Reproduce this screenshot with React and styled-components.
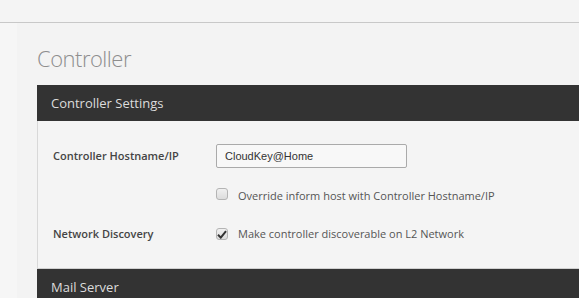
import React from "react";
import styled, { createGlobalStyle } from "styled-components";

const GlobalStyle = createGlobalStyle`
  body {
    margin: 0;
    background: #f4f4f4;
    font-family: "Open Sans", "Liberation Sans", sans-serif;
    overflow: hidden;
  }
`;

const App = () => {
  return (
    <>
      <GlobalStyle />
      <TopBar />
      <Layout>
        <Strip />
        <Main>
          <PageTitle>Controller</PageTitle>
          <SectionHeader>Controller Settings</SectionHeader>
          <SectionBody>
            <Row>
              <Label>Controller Hostname/IP</Label>
              <TextInput defaultValue="CloudKey@Home" />
            </Row>
            <Row gap={20}>
              <Label />
              <CheckLine>
                <Box offset={-2} />
                <CheckText>Override inform host with Controller Hostname/IP</CheckText>
              </CheckLine>
            </Row>
            <Row gap={22}>
              <Label>Network Discovery</Label>
              <CheckLine>
                <Box offset={0} checked>
                  <svg width="10" height="9" viewBox="0 0 10 9">
                    <path d="M1 4.8 L3.8 7.6 L9 1.2" fill="none" stroke="#333" strokeWidth="2" />
                  </svg>
                </Box>
                <CheckText>Make controller discoverable on L2 Network</CheckText>
              </CheckLine>
            </Row>
          </SectionBody>
          <SectionHeader>Mail Server</SectionHeader>
        </Main>
      </Layout>
    </>
  );
};

const TopBar = styled.div`
  height: 22px;
  border-bottom: 1px solid #c8c8c8;
  background: #f4f4f4;
`;

const Layout = styled.div`
  display: flex;
  height: 275px;
`;

const Strip = styled.div`
  width: 17px;
  flex-shrink: 0;
  background: #f6f6f6;
`;

const Main = styled.div`
  flex: 1;
  padding: 18px 0 0 20px;
  background: #f3f3f3;
`;

const PageTitle = styled.h1`
  margin: 0 0 12px;
  padding-top: 1px;
  height: 31px;
  font-size: 22px;
  line-height: 32px;
  letter-spacing: -0.5px;
  font-weight: 300;
  color: #8e8e8e;
`;

const SectionHeader = styled.div`
  height: 36px;
  line-height: 36px;
  padding-left: 14px;
  background: #333333;
  color: #dcdcdc;
  font-size: 13px;
`;

const SectionBody = styled.div`
  padding: 23px 15px 26px;
  background: #f4f4f4;
  border-left: 1px solid #d8d8d8;
  border-bottom: 1px solid #d0d0d0;
`;

const Row = styled.div`
  display: flex;
  align-items: center;
  margin-top: ${(p) => (p.gap ? `${p.gap}px` : 0)};
`;

const Label = styled.div`
  width: 163px;
  flex-shrink: 0;
  font-size: 11px;
  font-weight: 600;
  line-height: 16px;
  color: #444;
`;

const TextInput = styled.input`
  box-sizing: border-box;
  width: 191px;
  height: 24px;
  padding: 0 8px;
  border: 1px solid #aaa;
  border-radius: 2px;
  background: #f8f8f8;
  font-family: "Liberation Sans", Arial, sans-serif;
  font-size: 11px;
  color: #333;
  outline: none;
`;

const CheckLine = styled.div`
  display: flex;
  align-items: center;
`;

const Box = styled.span`
  box-sizing: border-box;
  width: 12px;
  height: 12px;
  margin-right: 10px;
  position: relative;
  top: ${(p) => p.offset}px;
  display: flex;
  align-items: center;
  justify-content: center;
  border: 1px solid #b4b4b4;
  border-radius: 3px;
  background: linear-gradient(#f0f0f0, #dcdcdc);
`;

const CheckText = styled.span`
  font-size: 11px;
  line-height: 16px;
  color: #555;
`;

export default App;
